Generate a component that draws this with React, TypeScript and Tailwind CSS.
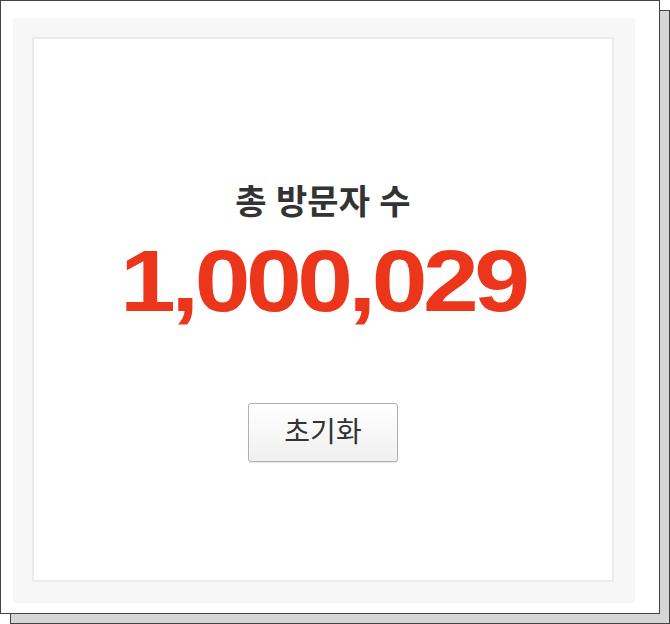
import React from 'react'

// Visitor counter card inside a framed window with an offset bevel shadow
export default function App(): React.JSX.Element {
  return (
    <div className="relative h-[624px] w-[670px] bg-white font-['Liberation_Sans','Noto_Sans_CJK_KR',sans-serif]">
      {/* offset bevel shadow behind the frame */}
      <div className="absolute left-[10px] top-[10px] h-[614px] w-[660px] border border-[#444] bg-[#d6d6d6]" />
      <div className="relative h-[614px] w-[660px] border border-[#444] bg-white pl-[12px] pt-[17px]">
        <div className="h-[585px] w-[622px] bg-[#f7f7f7] p-[19px]">
          <div className="flex h-[545px] w-[582px] flex-col items-center border-2 border-[#ebebeb] bg-white pt-[143px]">
            <div className="text-[34px] font-bold leading-[40px] text-[#333]">총 방문자 수</div>
            <div className="mt-[15px] scale-x-[1.14] text-[88px] font-bold leading-[88px] tracking-[-4px] text-[#ec361b]">
              1,000,029
            </div>
            <button
              type="button"
              className="mt-[78px] h-[59px] w-[150px] rounded-[3px] border border-[#b0b0b0] bg-gradient-to-b from-white to-[#f0f0f0] text-[28px] text-[#333] shadow-[0_1px_1px_rgba(0,0,0,0.1)]"
            >
              초기화
            </button>
          </div>
        </div>
      </div>
    </div>
  )
}
